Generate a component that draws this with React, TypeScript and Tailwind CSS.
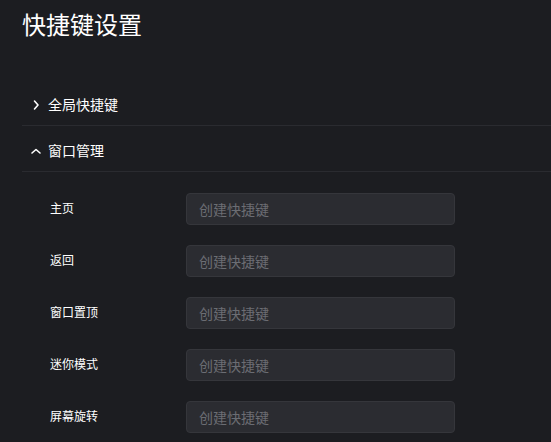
import React from "react";

const font = { fontFamily: '"Noto Sans CJK SC", "Noto Sans", sans-serif' };

function ChevronRight() {
  return (
    <svg width="12" height="12" viewBox="0 0 12 12" fill="none">
      <path d="M4.5 2 L8 6 L4.5 10" stroke="#ffffff" strokeWidth="1.6" strokeLinecap="round" strokeLinejoin="round" />
    </svg>
  );
}

function ChevronUp() {
  return (
    <svg width="12" height="12" viewBox="0 0 12 12" fill="none">
      <path d="M2 8 L6 4.5 L10 8" stroke="#ffffff" strokeWidth="1.6" strokeLinecap="round" strokeLinejoin="round" />
    </svg>
  );
}

const rows = ["主页", "返回", "窗口置顶", "迷你模式", "屏幕旋转"];

export default function App() {
  return (
    <div className="w-[551px] h-[442px] overflow-hidden bg-[#1c1d21] text-white" style={font}>
      <h1 className="pl-[22px] pt-2 text-[24px] leading-8 font-normal">快捷键设置</h1>
      <div className="ml-[22px] mt-[40px]">
        <div className="flex items-center h-[46px] border-b border-[#2a2b30] pl-[8px] pt-[4px]">
          <ChevronRight />
          <span className="ml-[6px] text-[14px]">全局快捷键</span>
        </div>
        <div className="flex items-center h-[46px] border-b border-[#2a2b30] pl-[8px] pt-[4px]">
          <ChevronUp />
          <span className="ml-[6px] text-[14px]">窗口管理</span>
        </div>
        <div className="flex flex-col gap-5 pt-[21px] pl-[28px]">
          {rows.map((r) => (
            <div key={r} className="flex items-center">
              <div className="w-[136px] text-[12px] -mt-[2px]">{r}</div>
              <div className="w-[269px] h-8 rounded bg-[#2b2c31] border border-[#35363b] flex items-center px-[12px] text-[14px] text-[#6b6d73]">
                创建快捷键
              </div>
            </div>
          ))}
        </div>
      </div>
    </div>
  );
}
